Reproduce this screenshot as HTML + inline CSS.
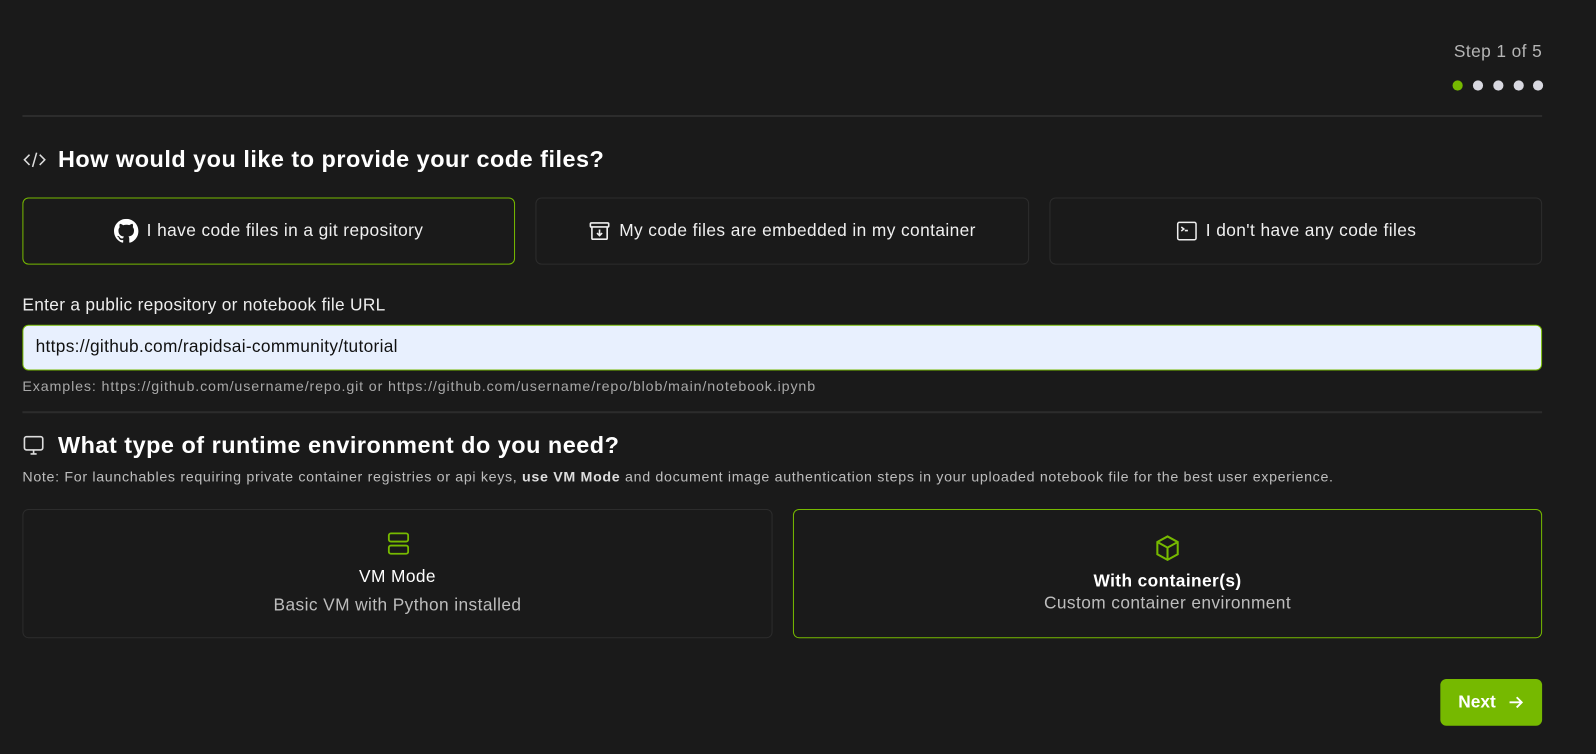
<!DOCTYPE html>
<html><head><meta charset="utf-8"><style>
*{box-sizing:border-box;margin:0;padding:0}
body{width:1596px;height:754px;background:#1a1a1a;font-family:"Liberation Sans",sans-serif;color:#eee;overflow:hidden}
#w{position:relative;width:1568px;height:741px;transform:scale(1.0179);transform-origin:0 0}
.a{position:absolute}
.step{right:53px;top:41px;font-size:17px;letter-spacing:0.4px;color:#b5b5b5}
.dot{width:10px;height:10px;border-radius:50%;background:#d8d8e0;top:79px}
.hr{left:22px;width:1493px;height:2px;background:#2c2c2c}
h2{font-size:23px;letter-spacing:0.5px;font-weight:bold;color:#fff;position:absolute;left:57px}
.card{border:1px solid #2c2c2c;border-radius:6px;display:flex;align-items:center;justify-content:center;font-size:17px;letter-spacing:0.4px;color:#f0f0f0;gap:8px}
.sel{border-color:#76b900}
.big{flex-direction:column;gap:0}
</style></head><body><div id="w">
<div class="a step">Step 1 of 5</div>
<div class="a dot" style="left:1427px;background:#76b900"></div>
<div class="a dot" style="left:1447px"></div>
<div class="a dot" style="left:1467px"></div>
<div class="a dot" style="left:1487px"></div>
<div class="a dot" style="left:1506px"></div>
<div class="a hr" style="top:113px"></div>

<svg class="a" style="left:22px;top:147px" width="24" height="20" viewBox="0 0 24 20" fill="none" stroke="#ddd" stroke-width="1.5"><path d="M7 5L2 10l5 5M17 5l5 5-5 5M14 3l-4 14"/></svg>
<h2 style="top:143px">How would you like to provide your code files?</h2>

<div class="a card sel" style="left:22px;top:194px;width:484px;height:66px">
<svg width="24" height="24" viewBox="0 0 16 16" fill="#fff"><path d="M8 0C3.58 0 0 3.58 0 8c0 3.54 2.29 6.530 5.47 7.59.4.07.55-.17.55-.38v-1.33c-2.23.48-2.7-1.070-2.7-1.07-.36-.92-.89-1.17-.89-1.17-.73-.5.06-.49.06-.49.8.06 1.23.83 1.23.83.72 1.220 1.87.87 2.33.66.07-.52.28-.87.51-1.07-1.78-.2-3.65-.89-3.65-3.95 0-.87.31-1.59.82-2.15-.08-.2-.36-1.02.08-2.12 0 0 .67-.21 2.2.82A7.6 7.6 0 018 3.86c.68 0 1.36.09 2 .27 1.53-1.04 2.2-.82 2.2-.82.44 1.1.16 1.92.08 2.12.51.56.82 1.27.82 2.15 0 3.07-1.87 3.75-3.65 3.95.29.25.54.73.54 1.48v2.2c0 .21.15.46.55.38A8 8 0 0016 8c0-4.42-3.58-8-8-8z"/></svg>
I have code files in a git repository</div>
<div class="a card" style="left:526px;top:194px;width:485px;height:66px">
<svg width="22" height="22" viewBox="0 0 22 22" fill="none" stroke="#eee" stroke-width="1.6"><rect x="2" y="3" width="18" height="4" rx="1"/><path d="M3.5 7v11a1 1 0 001 1h13a1 1 0 001-1V7M11 9.5v6M8.5 13l2.5 2.5 2.5-2.5"/></svg>
My code files are embedded in my container</div>
<div class="a card" style="left:1031px;top:194px;width:484px;height:66px">
<svg width="22" height="22" viewBox="0 0 22 22" fill="none" stroke="#eee" stroke-width="1.5"><rect x="2" y="2.5" width="18" height="17" rx="1.5"/><path d="M5.5 7l2.5 2-2.5 2M9 10.5h3"/></svg>
I don't have any code files</div>

<div class="a" style="left:22px;top:290px;font-size:17px;letter-spacing:0.3px;color:#eee">Enter a public repository or notebook file URL</div>
<div class="a" style="left:22px;top:319px;width:1493px;height:45px;background:#e8f0fe;border:1px solid #76b900;border-radius:6px;color:#111;font-size:17px;letter-spacing:0.3px;padding:11px 12px">https://github.com/rapidsai-community/tutorial</div>
<div class="a" style="left:22px;top:371px;font-size:14px;letter-spacing:0.85px;color:#a8a8a8">Examples: https://github.com/username/repo.git or https://github.com/username/repo/blob/main/notebook.ipynb</div>
<div class="a hr" style="top:404px"></div>

<svg class="a" style="left:22px;top:427px" width="22" height="22" viewBox="0 0 22 22" fill="none" stroke="#ddd" stroke-width="1.6"><rect x="2" y="2" width="18" height="13" rx="2"/><path d="M8 19h6M11 15v4"/></svg>
<h2 style="top:424px">What type of runtime environment do you need?</h2>
<div class="a" style="left:22px;top:460px;font-size:14px;letter-spacing:0.65px;color:#bdbdbd">Note: For launchables requiring private container registries or api keys, <b style="color:#ddd">use VM Mode</b> and document image authentication steps in your uploaded notebook file for the best user experience.</div>

<div class="a card big" style="left:22px;top:500px;width:737px;height:127px">
<svg width="22" height="24" viewBox="0 0 22 24" fill="none" stroke="#76b900" stroke-width="1.8"><rect x="2" y="1" width="19" height="8" rx="2"/><rect x="2" y="13" width="19" height="8" rx="2"/></svg>
<div style="margin-top:10px;color:#fff">VM Mode</div>
<div style="color:#bdbdbd;margin-top:8px">Basic VM with Python installed</div></div>
<div class="a card big sel" style="left:779px;top:500px;width:736px;height:127px">
<svg width="26" height="28" viewBox="0 0 26 28" fill="none" stroke="#76b900" stroke-width="2"><path d="M13 2l10 5.5v12L13 25 3 19.5v-12zM3 7.5l10 5.5 10-5.5M13 13v12"/></svg>
<div style="color:#fff;font-weight:bold;margin-top:8px">With container(s)</div>
<div style="color:#bdbdbd;margin-top:2px">Custom container environment</div></div>

<div class="a" style="left:1415px;top:667px;width:100px;height:46px;background:#76b900;border-radius:6px;color:#fff;font-size:17px;font-weight:bold;display:flex;align-items:center;justify-content:center;gap:12px">Next
<svg width="16" height="16" viewBox="0 0 16 16" fill="none" stroke="#fff" stroke-width="1.8"><path d="M2 8h12M9 3l5 5-5 5"/></svg></div>
</div></body></html>
